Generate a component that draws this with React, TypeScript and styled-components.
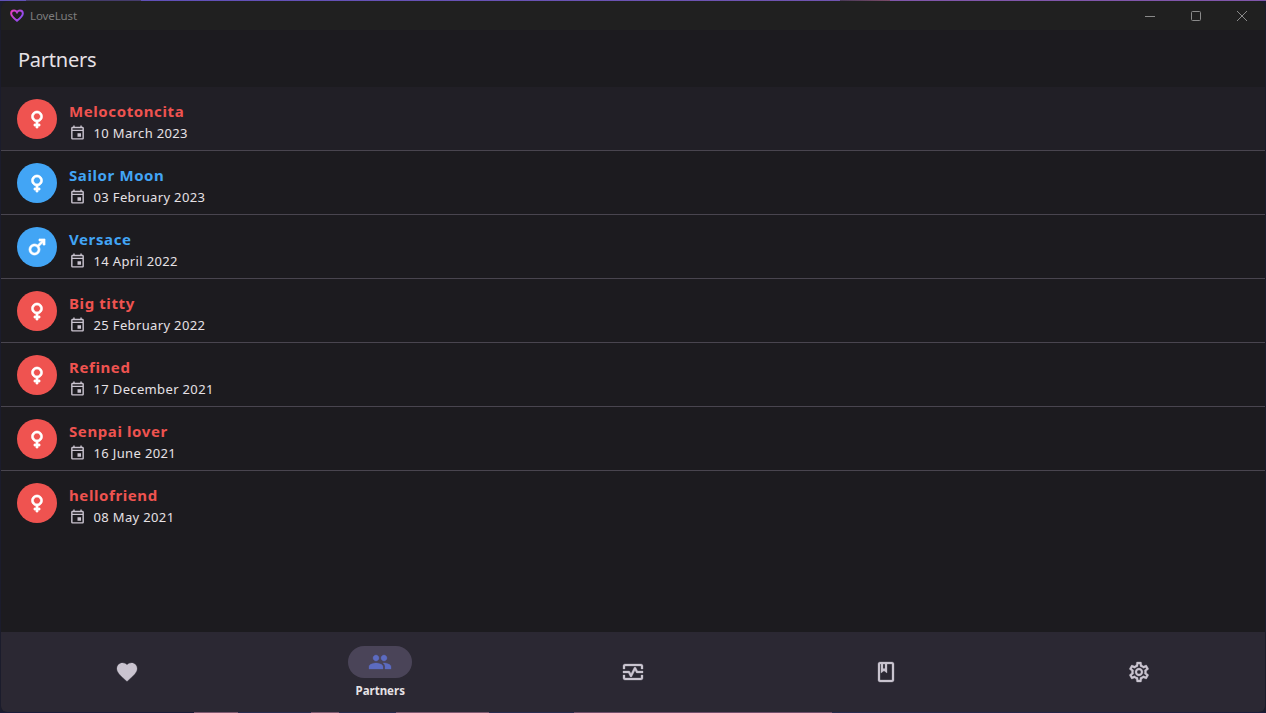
import React from "react";
import styled, { createGlobalStyle } from "styled-components";
import {
  MdFavorite,
  MdPeople,
  MdOutlineMonitorHeart,
  MdOutlineBook,
  MdOutlineSettings,
  MdOutlineEvent,
  MdFemale,
  MdMale,
} from "react-icons/md";

const Global = createGlobalStyle`
  html, body { margin: 0; padding: 0; background: #1b1c2c; }
  #root { width: 1266px; height: 713px; overflow: hidden; }
  * { box-sizing: border-box; }
`;

const TOP_STRIP = `linear-gradient(90deg,
  #6252b8 0, #6252b8 26px, #453c6c 26px, #453c6c 141px, #6050b8 141px, #7054b0 840px,
  #4a3a58 840px, #7a4a68 890px, #8056aa 890px, #8056aa 100%)`;

const BOTTOM_STRIP = `linear-gradient(90deg,
  #1b1c3a 0, #1b1c3a 194px, #7d5a72 194px, #7d5a72 238px, #2a2c50 238px, #2a2c50 311px,
  #7d5a72 311px, #7d5a72 339px, #2a2c50 339px, #2a2c50 396px, #7d5a72 396px, #7d5a72 489px,
  #2a2c50 489px, #2a2c50 574px, #70506c 574px, #70506c 832px, #2a2c50 832px, #1b1c3a 100%)`;

const Desktop = styled.div`
  width: 1266px;
  height: 713px;
  padding: 1px;
  background-color: #1b1c2c;
  background-image: ${TOP_STRIP}, ${BOTTOM_STRIP};
  background-size: 100% 1px, 100% 1px;
  background-position: top left, bottom left;
  background-repeat: no-repeat;
  font-family: "Noto Sans", "Open Sans", sans-serif;
`;

const Window = styled.div`
  width: 100%;
  height: 100%;
  display: flex;
  flex-direction: column;
  background: #1c1b1f;
  border-radius: 8px 8px 6px 6px;
  overflow: hidden;
`;

const TitleBar = styled.div`
  height: 29px;
  flex: none;
  display: flex;
  align-items: center;
  background: #202020;
  padding-left: 9px;
`;

const AppName = styled.span`
  margin-left: 6px;
  font-size: 11.5px;
  letter-spacing: -0.1px;
  color: #7d7d7d;
`;

const WinControls = styled.div`
  margin-left: auto;
  display: flex;
  height: 100%;
`;

const WinButton = styled.div`
  width: 46px;
  height: 100%;
  display: flex;
  align-items: center;
  justify-content: center;
  color: #8a8a8a;
`;

const Header = styled.header`
  height: 57px;
  flex: none;
  display: flex;
  align-items: center;
  padding: 2px 0 0 17px;
  font-size: 20px;
  letter-spacing: -0.25px;
  color: #e6e1e5;
  background: #1c1b1f;
`;

const List = styled.div`
  flex: 1;
  min-height: 0;
  display: flex;
  flex-direction: column;
`;

const Row = styled.div<{ $first?: boolean; $last?: boolean }>`
  height: 64px;
  flex: none;
  display: flex;
  align-items: center;
  padding-left: 16px;
  background: ${(p) => (p.$first ? "#211f26" : "transparent")};
  border-bottom: 1px solid ${(p) => (p.$last ? "transparent" : "#49454f")};
`;

const Avatar = styled.div<{ $color: string }>`
  width: 40px;
  height: 40px;
  border-radius: 50%;
  background: ${(p) => p.$color};
  color: #fff;
  display: flex;
  align-items: center;
  justify-content: center;
  font-size: 24px;
  flex: none;

  svg {
    stroke-width: 0.7px;
  }

  svg [fill="none"] {
    stroke: none;
  }
`;

const Info = styled.div`
  margin-left: 12px;
  margin-top: 7px;
  display: flex;
  flex-direction: column;
`;

const Name = styled.div<{ $color: string }>`
  font-size: 15px;
  line-height: 20px;
  font-weight: 700;
  letter-spacing: 0.6px;
  color: ${(p) => p.$color};
`;

const DateLine = styled.div`
  display: flex;
  align-items: center;
  height: 20px;
  font-size: 13px;
  letter-spacing: 0.35px;
  color: #e6e1e5;
  margin-top: 2px;
`;

const DateIcon = styled.span`
  display: flex;
  width: 17px;
  height: 17px;
  font-size: 17px;
  color: #cac4d0;
  margin: -2px 8px 0 -0.5px;
`;

const Nav = styled.nav`
  height: 80px;
  flex: none;
  display: grid;
  grid-template-columns: repeat(5, 1fr);
  background: #2b2833;
`;

const NavItem = styled.div<{ $active?: boolean }>`
  display: flex;
  flex-direction: column;
  align-items: center;
  justify-content: ${(p) => (p.$active ? "flex-start" : "center")};
  padding-top: ${(p) => (p.$active ? "14px" : "0")};
  color: #cac4d0;
`;

const Pill = styled.div<{ $active?: boolean }>`
  width: 64px;
  height: 32px;
  border-radius: 16px;
  display: flex;
  align-items: center;
  justify-content: center;
  font-size: 24px;
  background: ${(p) => (p.$active ? "#4a4458" : "transparent")};
  color: ${(p) => (p.$active ? "#5c6bc0" : "#cac4d0")};

  svg {
    stroke-width: 0.3px;
  }

  svg [fill="none"] {
    stroke: none;
  }
`;

const NavLabel = styled.div`
  margin-top: 5px;
  font-size: 11.5px;
  line-height: 16px;
  font-weight: 700;
  color: #e6e1e5;
`;

const RED = "#ef5350";
const BLUE = "#42a5f5";

const partners = [
  { name: "Melocotoncita", date: "10 March 2023", color: RED, male: false },
  { name: "Sailor Moon", date: "03 February 2023", color: BLUE, male: false },
  { name: "Versace", date: "14 April 2022", color: BLUE, male: true },
  { name: "Big titty", date: "25 February 2022", color: RED, male: false },
  { name: "Refined", date: "17 December 2021", color: RED, male: false },
  { name: "Senpai lover", date: "16 June 2021", color: RED, male: false },
  { name: "hellofriend", date: "08 May 2021", color: RED, male: false },
];

const Logo = () => (
  <svg width="14" height="13" viewBox="0 0 24 22" fill="none">
    <defs>
      <linearGradient id="lg" x1="0" y1="0" x2="1" y2="0.6">
        <stop offset="0" stopColor="#e83cc0" />
        <stop offset="1" stopColor="#8a4df0" />
      </linearGradient>
    </defs>
    <path
      d="M12 20C5 14.500 2 11.500 2 7.600 2 4.700 4.200 2.500 7 2.500c2 0 3.800 1 5 3 1.200-2 3-3 5-3 2.800 0 5 2.200 5 5.100 0 3.900-3 6.900-10 12.400z"
      stroke="url(#lg)"
      strokeWidth="3.400"
    />
  </svg>
);

export default function App() {
  return (
    <Desktop>
      <Global />
      <Window>
        <TitleBar>
          <Logo />
          <AppName>LoveLust</AppName>
          <WinControls>
            <WinButton>
              <svg width="10" height="10" viewBox="0 0 10 10">
                <path d="M0 5.500H10" stroke="currentColor" />
              </svg>
            </WinButton>
            <WinButton>
              <svg width="10" height="10" viewBox="0 0 10 10" fill="none">
                <rect x="0.500" y="0.500" width="9" height="9" rx="1" stroke="currentColor" />
              </svg>
            </WinButton>
            <WinButton>
              <svg width="10" height="10" viewBox="0 0 10 10" fill="none">
                <path d="M0 0L10 10M10 0L0 10" stroke="currentColor" />
              </svg>
            </WinButton>
          </WinControls>
        </TitleBar>
        <Header>Partners</Header>
        <List>
          {partners.map((p, i) => (
            <Row key={p.name} $first={i === 0} $last={i === partners.length - 1}>
              <Avatar $color={p.color}>{p.male ? <MdMale /> : <MdFemale />}</Avatar>
              <Info>
                <Name $color={p.color}>{p.name}</Name>
                <DateLine>
                  <DateIcon>
                    <MdOutlineEvent />
                  </DateIcon>
                  {p.date}
                </DateLine>
              </Info>
            </Row>
          ))}
        </List>
        <Nav>
          <NavItem>
            <Pill>
              <MdFavorite />
            </Pill>
          </NavItem>
          <NavItem $active>
            <Pill $active>
              <MdPeople />
            </Pill>
            <NavLabel>Partners</NavLabel>
          </NavItem>
          <NavItem>
            <Pill>
              <MdOutlineMonitorHeart />
            </Pill>
          </NavItem>
          <NavItem>
            <Pill>
              <MdOutlineBook />
            </Pill>
          </NavItem>
          <NavItem>
            <Pill>
              <MdOutlineSettings />
            </Pill>
          </NavItem>
        </Nav>
      </Window>
    </Desktop>
  );
}
